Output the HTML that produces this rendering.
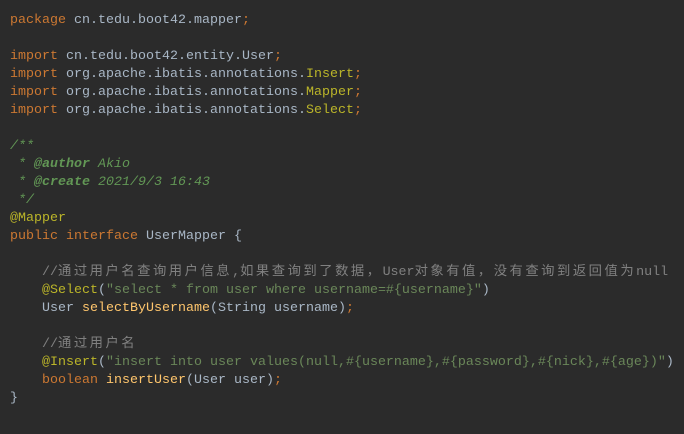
<!DOCTYPE html>
<html><head><meta charset="utf-8"><style>
html,body{margin:0;padding:0;background:#2b2b2b;width:684px;height:434px;overflow:hidden}
pre{margin:0;padding:12px 0 0 10px;font-family:"Liberation Mono","Noto Sans CJK SC",monospace;font-size:13.33px;line-height:18px;color:#a9b7c6;white-space:pre}
.k{color:#cc7832}.a{color:#bbb529}.c{color:#808080}.d{color:#629755;font-style:italic}.dt{color:#629755;font-style:italic;font-weight:bold}.s{color:#6a8759}.m{color:#ffc66d}
.z{letter-spacing:2.5px}
</style></head><body><pre><span class="k">package</span> cn.tedu.boot42.mapper<span class="k">;</span>

<span class="k">import</span> cn.tedu.boot42.entity.User<span class="k">;</span>
<span class="k">import</span> org.apache.ibatis.annotations.<span class="a">Insert</span><span class="k">;</span>
<span class="k">import</span> org.apache.ibatis.annotations.<span class="a">Mapper</span><span class="k">;</span>
<span class="k">import</span> org.apache.ibatis.annotations.<span class="a">Select</span><span class="k">;</span>

<span class="d">/**</span>
<span class="d"> * </span><span class="dt">@author</span><span class="d"> Akio</span>
<span class="d"> * </span><span class="dt">@create</span><span class="d"> 2021/9/3 16:43</span>
<span class="d"> */</span>
<span class="a">@Mapper</span>
<span class="k">public interface</span> UserMapper {

    <span class="c">//<span class="z">通过用户名查询用户信息</span>,<span class="z">如果查询到了数据，</span>User<span class="z">对象有值，没有查询到返回值为</span>null</span>
    <span class="a">@Select</span>(<span class="s">"select * from user where username=#{username}"</span>)
    User <span class="m">selectByUsername</span>(String username)<span class="k">;</span>

    <span class="c">//<span class="z">通过用户名</span></span>
    <span class="a">@Insert</span>(<span class="s">"insert into user values(null,#{username},#{password},#{nick},#{age})"</span>)
    <span class="k">boolean</span> <span class="m">insertUser</span>(User user)<span class="k">;</span>
}</pre></body></html>
